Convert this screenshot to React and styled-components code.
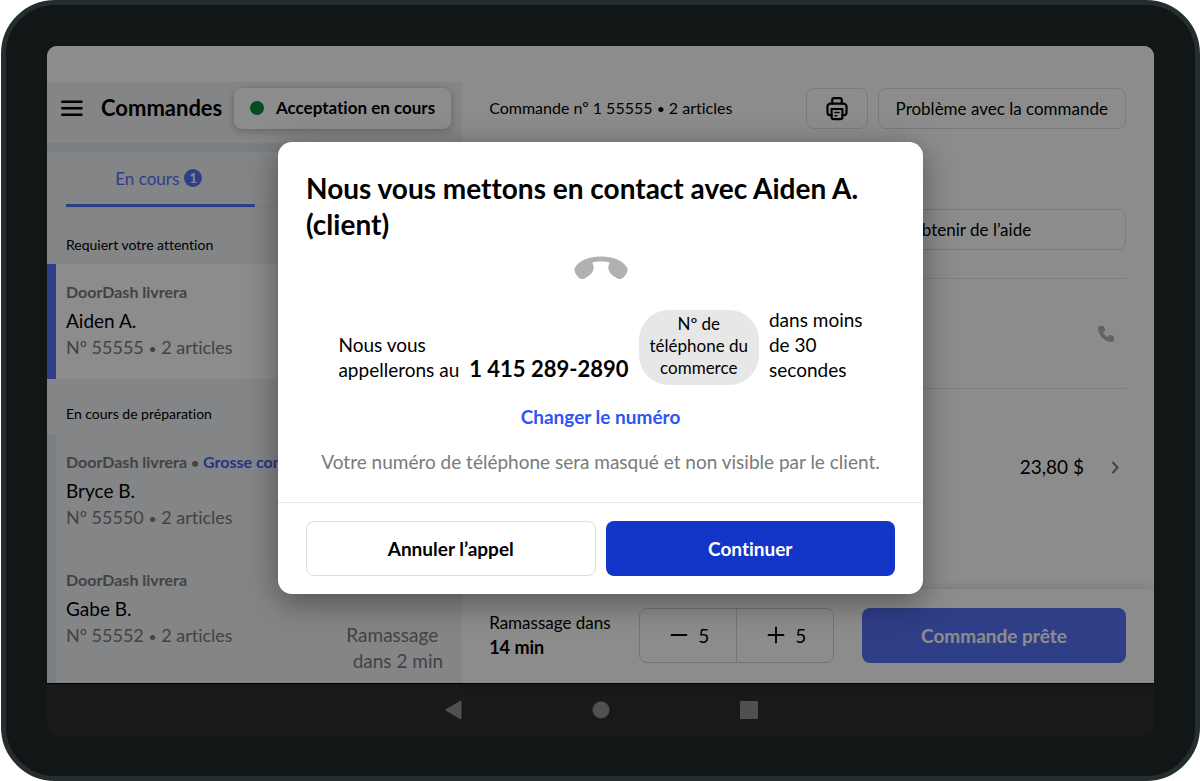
import React, { useState } from 'react';
import styled, { createGlobalStyle } from 'styled-components';

const GlobalStyle = createGlobalStyle`
  * {
    box-sizing: border-box;
  }

  body {
    margin: 0;
    background-color: #fff;
    color: #000;
    font-family: 'Lato', 'Liberation Sans', sans-serif;
    font-size: 18px;
    font-variant-ligatures: none;
  }

  button {
    font-family: inherit;
    font-variant-ligatures: inherit;
    color: inherit;
    cursor: pointer;
  }

  h1, h2, h3, p {
    margin: 0;
  }
`;

const Device = styled.div`
  display: flex;
  min-height: 100vh;
  margin-left: 1px;
  padding: 41px 41px 40px;
  border: 5px solid #252e2e;
  border-radius: 54px;
  background-color: #111616;
`;

const Screen = styled.div`
  flex: 1;
  min-width: 0;
  display: flex;
  flex-direction: column;
  border-radius: 10px;
  overflow: hidden;
`;

const AppArea = styled.div`
  position: relative;
  flex: 1;
  display: flex;
  flex-direction: column;
  background-color: #fff;
`;

const StatusBar = styled.div`
  height: 36px;
`;

const Columns = styled.div`
  flex: 1;
  display: grid;
  grid-template-columns: 3fr 5fr;
`;

const Bullet = styled.span`
  font-size: 14px;
  line-height: 1;

  &::before {
    content: '•';
  }
`;

/* Orders list */

const Sidebar = styled.aside`
  position: relative;
  z-index: 1;
  min-width: 0;
  display: flex;
  flex-direction: column;
  background-color: #f1f3f6;
`;

const SidebarHeader = styled.header`
  height: 70px;
  display: flex;
  align-items: flex-start;
  padding: 6px 11px 0 14px;
  border-bottom: 9px solid #e0e6eb;
`;

const MenuButton = styled.button`
  height: 40px;
  padding: 0;
  border: none;
  background: none;
  display: flex;
  align-items: center;
`;

const SidebarTitle = styled.h1`
  flex: 1;
  padding-left: 18px;
  font-size: 22px;
  line-height: 39px;
`;

const StatusButton = styled.button`
  height: 41px;
  display: flex;
  align-items: center;
  gap: 12px;
  padding: 0 16px 2px;
  border: none;
  border-radius: 8px;
  background-color: #fff;
  box-shadow: 0 2px 8px rgba(0, 0, 0, 0.25);
  font-size: 17px;
  font-weight: 700;
`;

const Dot = styled.span`
  width: 14px;
  height: 14px;
  border-radius: 50%;
  background-color: #0a8a37;
`;

const Tabs = styled.nav`
  display: grid;
  grid-template-columns: 1fr 1fr;
  margin: 0 19px;
  border-bottom: 1px solid #e6e9ec;
`;

const Tab = styled.button`
  height: 55px;
  display: flex;
  align-items: center;
  justify-content: center;
  gap: 5px;
  padding: 0 3px 3px 0;
  border: none;
  background: linear-gradient(#5571f6, #5571f6) bottom / 100% 3px no-repeat;
  border-radius: 3px 3px 0 0;
  color: #5571f6;
  font-size: 17px;
`;

const Count = styled.span`
  width: 18px;
  height: 18px;
  border-radius: 50%;
  background-color: #5571f6;
  color: #f1f3f6;
  font-size: 13px;
  font-weight: 900;
  line-height: 18px;
`;

const SectionLabel = styled.h2`
  padding: ${(props) => (props.$first ? '26px 19px 8px' : '24px 19px 10px')};
  font-size: 14px;
  font-weight: 400;
  line-height: 22px;
`;

const Order = styled.article`
  display: flex;
  justify-content: space-between;
  height: ${(props) => (props.$selected ? '115px' : '118px')};
  padding: ${(props) => (props.$selected ? '15px 19px 0 10px' : '14px 19px 0 10px')};
  border-left: 9px solid ${(props) => (props.$selected ? '#5571f6' : '#e0e6eb')};
  background-color: ${(props) => (props.$selected ? '#fff' : '#f1f3f6')};

  &:last-child {
    flex: 1;
  }
`;

const OrderKind = styled.p`
  color: #7a7a7a;
  font-size: 16px;
  font-weight: 700;
  line-height: 26px;
  white-space: nowrap;
`;

const Highlight = styled.span`
  color: #4161ee;
`;

const Customer = styled.h3`
  padding-top: 3px;
  font-size: 19px;
  font-weight: 400;
  line-height: 26px;
`;

const OrderInfo = styled.p`
  color: #7a7a7a;
  line-height: 26px;
`;

const Pickup = styled.p`
  padding-top: 55px;
  color: #7a7a7a;
  font-size: 19px;
  line-height: 26px;
  text-align: right;
`;

/* Order details */

const Main = styled.main`
  min-width: 0;
  display: flex;
  flex-direction: column;
`;

const Toolbar = styled.header`
  display: flex;
  align-items: center;
  gap: 10px;
  padding: 6px 28px 0 27px;
`;

const OrderNumber = styled.p`
  flex: 1;
  padding-bottom: 2px;
  font-size: 16px;
  white-space: nowrap;
`;

const OutlineButton = styled.button`
  height: 41px;
  display: flex;
  align-items: center;
  justify-content: center;
  padding: 0 17px;
  border: 1px solid #dedede;
  border-radius: 8px;
  background-color: #fff;
  font-size: 17px;
`;

const HelpRow = styled.div`
  display: grid;
  grid-template-columns: 1fr 1fr;
  gap: 12px;
  padding: 80px 28px 28px 27px;

  ${OutlineButton} {
    grid-column: 2;
  }
`;

const DetailRow = styled.div`
  display: flex;
  justify-content: flex-end;
  align-items: center;
  gap: 24px;
  height: ${(props) => (props.$tall ? '156px' : '110px')};
  margin: 0 28px 0 27px;
  padding-right: ${(props) => (props.$tall ? '4px' : '12px')};
  border-top: 1px solid #e6e6e6;
  font-size: 19px;
`;

const IconButton = styled.button`
  display: flex;
  padding: 0;
  border: none;
  background: none;
  color: ${(props) => (props.$light ? '#b4b4b4' : '#7a7a7a')};
`;

const Footer = styled.footer`
  display: flex;
  align-items: center;
  gap: 28px;
  margin-top: auto;
  height: 94px;
  padding: 0 28px 2px 27px;
  box-shadow: 0 -2px 8px rgba(0, 0, 0, 0.12);
`;

const ReadyIn = styled.p`
  flex: 1;
  font-size: 17px;
  line-height: 25px;
  white-space: nowrap;

  strong {
    font-size: 18px;
  }
`;

const Stepper = styled.div`
  display: flex;
  width: 196px;
  height: 55px;
  border: 1px solid #d4d4d4;
  border-radius: 8px;
`;

const StepButton = styled.button`
  flex: 1;
  display: flex;
  align-items: center;
  justify-content: center;
  gap: 10px;
  padding: 0 0 0 4px;
  border: none;
  background: none;
  font-size: 19px;

  & + & {
    border-left: 1px solid #d4d4d4;
  }
`;

const ReadyButton = styled.button`
  width: 265px;
  height: 55px;
  border: none;
  border-radius: 8px;
  background-color: #5571f6;
  color: #fff;
  font-size: 19px;
  font-weight: 700;
`;

/* Call dialog */

const Overlay = styled.div`
  position: absolute;
  inset: 0;
  z-index: 2;
  display: flex;
  align-items: flex-start;
  justify-content: center;
  padding: 96px 20px 0;
  background-color: rgba(0, 0, 0, 0.45);
`;

const Dialog = styled.section`
  width: 100%;
  max-width: 645px;
  border-radius: 14px;
  background-color: #fff;
  box-shadow: 0 8px 32px rgba(0, 0, 0, 0.4);
`;

const DialogBody = styled.div`
  display: flex;
  flex-direction: column;
  align-items: center;
  padding: 28px;
`;

const DialogTitle = styled.h2`
  align-self: stretch;
  font-size: 28px;
  line-height: 36px;
`;

const CallIcon = styled.svg`
  margin-top: 14px;
`;

const CallInfo = styled.div`
  display: flex;
  align-items: flex-end;
  gap: 10px;
  margin-top: 27px;
  font-size: 19px;
  line-height: 25px;
  white-space: nowrap;

  p {
    padding-bottom: 3px;
  }
`;

const PhoneNumber = styled.strong`
  padding-bottom: 4px;
  font-size: 22px;
`;

const Pill = styled.div`
  padding: 3px 11px 6px;
  border-radius: 30px;
  background-color: #e7e7e7;
  font-size: 17px;
  line-height: 22px;
  text-align: center;
`;

const ChangeLink = styled.a`
  margin-top: 20px;
  color: #2f55f0;
  font-size: 19px;
  font-weight: 700;
  line-height: 24px;
  text-decoration: none;
`;

const Note = styled.p`
  margin: 21px 0 0;
  color: #7a7a7a;
  font-size: 19px;
  line-height: 24px;
`;

const Actions = styled.div`
  display: grid;
  grid-template-columns: 1fr 1fr;
  gap: 10px;
  padding: 18px 28px;
  border-top: 1px solid #e9e9e9;
`;

const ActionButton = styled.button`
  height: 55px;
  border: ${(props) => (props.$primary ? 'none' : '1px solid #dedede')};
  border-radius: 8px;
  background-color: ${(props) => (props.$primary ? '#1336c9' : '#fff')};
  color: ${(props) => (props.$primary ? '#fff' : '#000')};
  font-size: 19px;
  font-weight: 700;
`;

/* Android navigation */

const SystemBar = styled.div`
  height: 53px;
  display: flex;
  align-items: center;
  justify-content: center;
  gap: 128px;
  border-top: 1px solid #000;
  background-color: #191919;
`;

const SystemButton = styled.button`
  display: flex;
  padding: 0;
  border: none;
  background: none;
  color: #505050;
`;

const MenuIcon = () => (
  <svg width="22" height="18" viewBox="0 0 22 18" stroke="#000" strokeWidth="2.4" strokeLinecap="round">
    <path d="M1.3 2.8h19.2M1.3 9.3h19.2M1.3 15.8h19.2" />
  </svg>
);

const PrinterIcon = () => (
  <svg width="26" height="26" viewBox="0 0 24 24" fill="none" stroke="#000" strokeWidth="2" strokeLinecap="round" strokeLinejoin="round">
    <path d="M7.6 7V3.8A1.8 1.8 0 0 1 9.4 2h5.2a1.8 1.8 0 0 1 1.8 1.8V7" />
    <path d="M7 17.7H5.6a2.4 2.4 0 0 1-2.4-2.4V9.8A2.8 2.8 0 0 1 6 7h12a2.8 2.8 0 0 1 2.8 2.8v5.5a2.4 2.4 0 0 1-2.4 2.4H17" />
    <path d="M7 12h10v7.3a2 2 0 0 1-2 2H9a2 2 0 0 1-2-2z" />
    <path d="M10.2 15.2h3.6M10.2 18.2h1.5" strokeWidth="1.5" />
  </svg>
);

const PhoneIcon = () => (
  <svg width="16" height="16" viewBox="0 0 16 16" fill="currentColor">
    <path d="M2 0h2.6c1 0 1.7.6 1.9 1.5l.5 1.9c.2.8 0 1.4-.6 1.9L5 6.5c.9 1.9 2.5 3.5 4.5 4.5l1.3-1.4c.5-.5 1.1-.7 1.9-.5l1.8.5c.9.2 1.5.9 1.5 1.8V14c0 1.2-.8 2-2 2C6.5 16 0 9.5 0 2 0 .8.8 0 2 0z" />
  </svg>
);

const ChevronIcon = () => (
  <svg width="14" height="16" viewBox="0 0 14 16" fill="none" stroke="currentColor" strokeWidth="2" strokeLinecap="round" strokeLinejoin="round">
    <path d="M5 3.5 9.5 8.500 5 13.500" />
  </svg>
);

const StepIcon = ({ plus }) => (
  <svg width="18" height="18" viewBox="0 0 18 18" stroke="#000" strokeWidth="1.8" strokeLinecap="round">
    <path d={plus ? 'M1.5 9h15M9 1.5v15' : 'M1.5 9h15'} />
  </svg>
);

const orders = [
  { kind: 'DoorDash livrera', tag: 'Grosse commande', name: 'Bryce B.', number: '55550' },
  { kind: 'DoorDash livrera', name: 'Gabe B.', number: '55552', pickup: true },
];

const OrderRow = ({ order, selected }) => (
  <Order $selected={selected}>
    <div>
      <OrderKind>
        {order.kind}
        {order.tag && <> <Bullet /> <Highlight>{order.tag}</Highlight></>}
      </OrderKind>
      <Customer>{order.name}</Customer>
      <OrderInfo>Nº {order.number} <Bullet /> 2 articles</OrderInfo>
    </div>
    {order.pickup && (
      <Pickup>
        Ramassage&nbsp;
        <br />
        dans 2 min
      </Pickup>
    )}
  </Order>
);

const CallDialog = ({ onClose }) => (
  <Overlay>
    <Dialog role="dialog" aria-modal="true" aria-labelledby="call-title">
      <DialogBody>
        <DialogTitle id="call-title">
          Nous vous mettons en contact avec Aiden A.
          <br />
          (client)
        </DialogTitle>
        <CallIcon width="54" height="24" viewBox="0 0 54 24" fill="#b1b1b1">
          <path d="M.7 12C4.5 5 14.5.6 27 .6S49.5 5 53.3 12c1 3.4-1.5 8-4.9 10.2-1.4.9-3.6.9-5 .2C38 19.8 34.300 16 34.300 11.500c0-1.800.9-3.600 1.300-5.100-4.800-1.100-12.400-1.100-17.200 0 .4 1.500 1.300 3.300 1.300 5.100 0 4.500-3.700 8.300-9.100 10.900-1.400.7-3.600.7-5-.2C2.200 20-.3 15.400.7 12z" />
        </CallIcon>
        <CallInfo>
          <p>
            Nous vous
            <br />
            appellerons au
          </p>
          <PhoneNumber>1 415 289-2890</PhoneNumber>
          <Pill>
            Nº de
            <br />
            téléphone du
            <br />
            commerce
          </Pill>
          <p>
            dans moins
            <br />
            de 30
            <br />
            secondes
          </p>
        </CallInfo>
        <ChangeLink href="#numero">Changer le numéro</ChangeLink>
        <Note>Votre numéro de téléphone sera masqué et non visible par le client.</Note>
      </DialogBody>
      <Actions>
        <ActionButton onClick={onClose}>Annuler l’appel</ActionButton>
        <ActionButton $primary>Continuer</ActionButton>
      </Actions>
    </Dialog>
  </Overlay>
);

const App = () => {
  const [dialogOpen, setDialogOpen] = useState(true);

  return (
    <>
      <GlobalStyle />
      <Device>
        <Screen>
          <AppArea>
            <StatusBar />
            <Columns>
              <Sidebar>
                <SidebarHeader>
                  <MenuButton aria-label="Menu">
                    <MenuIcon />
                  </MenuButton>
                  <SidebarTitle>Commandes</SidebarTitle>
                  <StatusButton>
                    <Dot />
                    Acceptation en cours
                  </StatusButton>
                </SidebarHeader>
                <Tabs>
                  <Tab>
                    En cours <Count>1</Count>
                  </Tab>
                </Tabs>
                <SectionLabel $first>Requiert votre attention</SectionLabel>
                <OrderRow selected order={{ kind: 'DoorDash livrera', name: 'Aiden A.', number: '55555' }} />
                <SectionLabel>En cours de préparation</SectionLabel>
                {orders.map((order) => (
                  <OrderRow key={order.number} order={order} />
                ))}
              </Sidebar>

              <Main>
                <Toolbar>
                  <OrderNumber>Commande nº 1 55555 <Bullet /> 2 articles</OrderNumber>
                  <OutlineButton aria-label="Imprimer">
                    <PrinterIcon />
                  </OutlineButton>
                  <OutlineButton>Problème avec la commande</OutlineButton>
                </Toolbar>
                <HelpRow>
                  <OutlineButton>Obtenir de l’aide</OutlineButton>
                </HelpRow>
                <DetailRow>
                  <IconButton $light aria-label="Appeler" onClick={() => setDialogOpen(true)}>
                    <PhoneIcon />
                  </IconButton>
                </DetailRow>
                <DetailRow $tall>
                  <span>23,80 $</span>
                  <IconButton aria-label="Détails">
                    <ChevronIcon />
                  </IconButton>
                </DetailRow>
                <Footer>
                  <ReadyIn>
                    Ramassage dans
                    <br />
                    <strong>14 min</strong>
                  </ReadyIn>
                  <Stepper>
                    <StepButton>
                      <StepIcon />5
                    </StepButton>
                    <StepButton>
                      <StepIcon plus />5
                    </StepButton>
                  </Stepper>
                  <ReadyButton>Commande prête</ReadyButton>
                </Footer>
              </Main>
            </Columns>
            {dialogOpen && <CallDialog onClose={() => setDialogOpen(false)} />}
          </AppArea>

          <SystemBar>
            <SystemButton aria-label="Retour">
              <svg width="20" height="20" viewBox="0 0 20 20" fill="currentColor">
                <path d="M17.2.8a.8.8 0 0 1 1.3.6v17.2a.8.8 0 0 1-1.3.6L2.5 10.6a.8.8 0 0 1 0-1.2z" />
              </svg>
            </SystemButton>
            <SystemButton aria-label="Accueil">
              <svg width="20" height="20" viewBox="0 0 20 20" fill="currentColor">
                <circle cx="10" cy="10" r="8.5" />
              </svg>
            </SystemButton>
            <SystemButton aria-label="Applications récentes">
              <svg width="20" height="20" viewBox="0 0 20 20" fill="currentColor">
                <rect x="1" y="1" width="18" height="18" rx="1" />
              </svg>
            </SystemButton>
          </SystemBar>
        </Screen>
      </Device>
    </>
  );
};

export default App;
